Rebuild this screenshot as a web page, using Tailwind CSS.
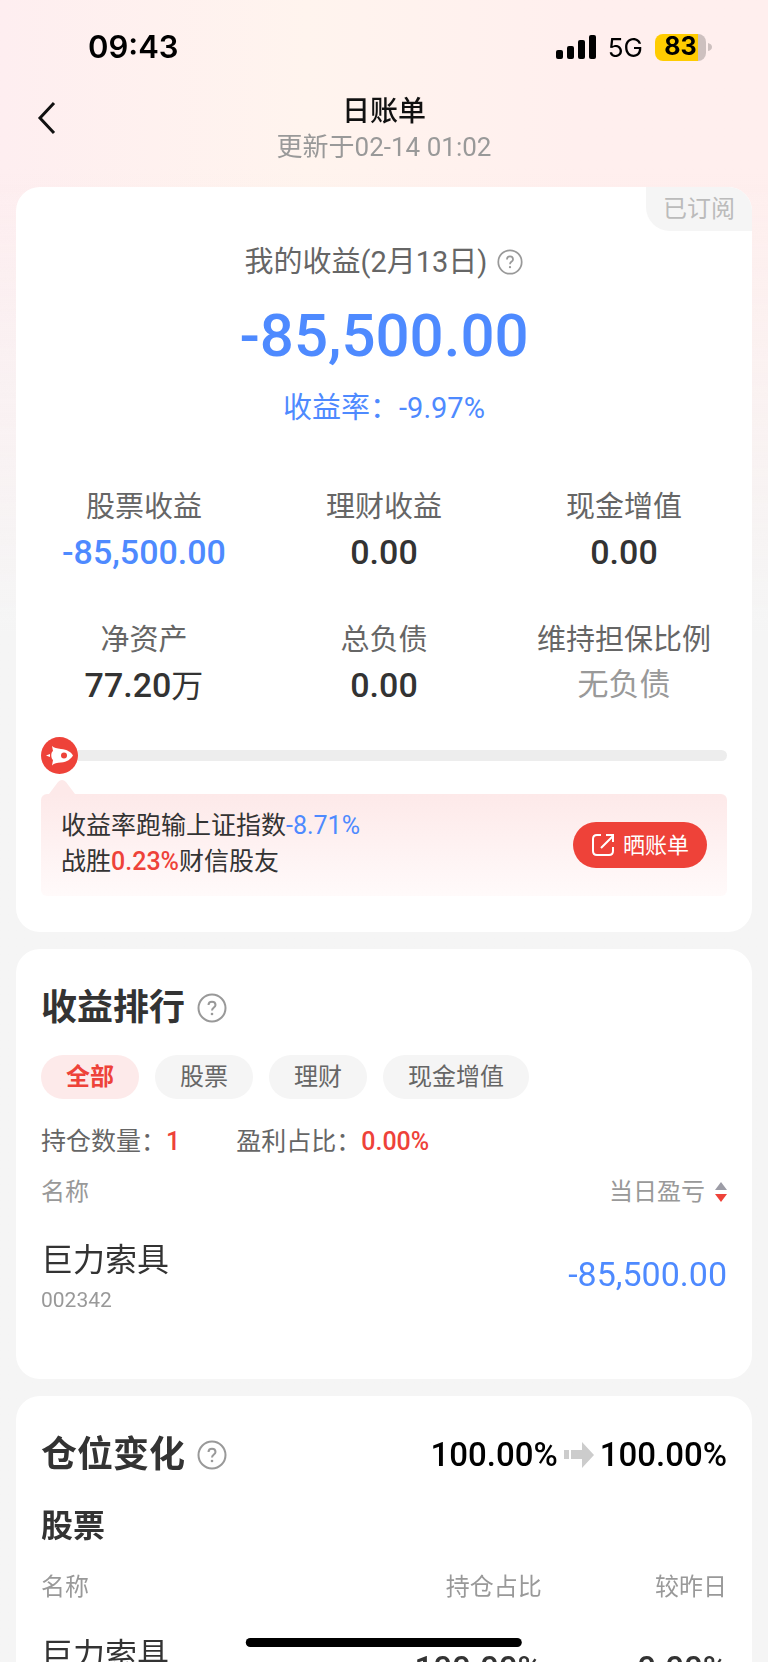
<!DOCTYPE html>
<html lang="zh-CN">
  <head>
    <meta charset="UTF-8" />
    <meta name="viewport" content="width=device-width, initial-scale=1.0" />
    <title>日账单</title>
    <script src="https://cdn.jsdelivr.net/npm/@tailwindcss/browser@4"></script>
  </head>

  <body class="bg-[#f5f5f5] font-['Roboto','Noto_Sans_CJK_SC',sans-serif] text-[#333]">
    <div class="h-screen overflow-hidden bg-linear-to-b from-transparent from-10% to-[#f5f5f5] to-38%">
      <div class="fixed inset-0 -z-10 bg-linear-to-r from-[#feeef0] via-[#fff4ee] via-40% to-[#ffefee] to-75%"></div>

      <!-- Status bar -->
      <div class="flex h-[94px] items-center justify-between pr-14 pl-[88px] font-['Inter',sans-serif] text-black">
        <span class="text-[31px] font-semibold">09:43</span>
        <div class="flex items-center">
          <svg class="mr-3 h-6 w-10" viewBox="0 0 40 24">
            <rect x="0" y="15" width="7" height="9" rx="2" />
            <rect x="11" y="11" width="7" height="13" rx="2" />
            <rect x="22" y="5" width="7" height="19" rx="2" />
            <rect x="33" y="0" width="7" height="24" rx="2" />
          </svg>
          <span class="mr-3 text-[26px]">5G</span>
          <span class="flex h-[27px] w-[51px] items-center justify-center rounded-lg bg-linear-to-r from-[#ffcc00] from-84% to-[#cdc0bf] to-84% text-[25px] font-bold">83</span>
          <svg class="ml-[2px] h-2 w-1" viewBox="0 0 4 8" fill="#cdc0bf"><path d="M0 0 Q4 1 4 4 Q4 7 0 8 Z" /></svg>
        </div>
      </div>

      <!-- Title -->
      <header class="relative pb-[23px] text-center">
        <button class="absolute top-1.5 left-[35px]" aria-label="返回">
          <svg class="h-9 w-6" viewBox="0 0 24 36" fill="none" stroke="#111" stroke-width="3"><path d="M19 3 L5 18 L19 33" /></svg>
        </button>
        <h1 class="text-[28px] leading-9 font-medium text-[#111]">日账单</h1>
        <p class="text-[26px] leading-[34px] text-[#999]">更新于02-14 01:02</p>
      </header>

      <main class="flex flex-col gap-[17px] px-4">
        <!-- Daily profit -->
        <section class="relative rounded-3xl bg-white px-[25px] pt-[55px] pb-9">
          <button class="absolute top-0 right-0 h-11 rounded-tr-3xl rounded-bl-3xl bg-[#f5f5f5] px-[17px] text-2xl text-[#bbb]">已订阅</button>

          <div class="flex items-center justify-center gap-2.5 text-[29px] leading-10 text-[#666]">
            <h2>我的收益(2月13日)</h2>
            <button aria-label="收益说明">
              <svg class="size-[26px]" viewBox="0 0 30 30" fill="none" stroke="#999" stroke-width="2">
                <circle cx="15" cy="15" r="13.5" />
                <path d="M11.500 12 C11.500 7.500 18.500 7.500 18.500 12 C18.500 14.500 15 14.500 15 17.500" />
                <circle cx="15" cy="21" r="1.300" fill="#999" stroke="none" />
              </svg>
            </button>
          </div>
          <p class="mt-3.5 text-center text-[60px] leading-20 font-medium text-[#4e8aff]">-85,500.00</p>
          <p class="mt-3 text-center text-[29px] leading-10 text-[#4e8aff]">收益率：-9.97%</p>

          <dl class="-mx-[17px] mt-[55px] grid grid-cols-3 gap-y-[43px] text-center">
            <div>
              <dt class="text-[29px] leading-12 text-[#666]">股票收益</dt>
              <dd class="text-[34px] leading-[42px] font-medium text-[#4e8aff]">-85,500.00</dd>
            </div>
            <div>
              <dt class="text-[29px] leading-12 text-[#666]">理财收益</dt>
              <dd class="text-[34px] leading-[42px] font-medium">0.00</dd>
            </div>
            <div>
              <dt class="text-[29px] leading-12 text-[#666]">现金增值</dt>
              <dd class="text-[34px] leading-[42px] font-medium">0.00</dd>
            </div>
            <div>
              <dt class="text-[29px] leading-12 text-[#666]">净资产</dt>
              <dd class="text-[34px] leading-[42px] font-medium">77.20<span class="text-[32px] font-normal">万</span></dd>
            </div>
            <div>
              <dt class="text-[29px] leading-12 text-[#666]">总负债</dt>
              <dd class="text-[34px] leading-[42px] font-medium">0.00</dd>
            </div>
            <div>
              <dt class="text-[29px] leading-12 text-[#666]">维持担保比例</dt>
              <dd class="text-[31px] leading-[42px] text-[#999]">无负债</dd>
            </div>
          </dl>

          <!-- Rank track -->
          <div class="mt-[30px] flex items-center">
            <svg class="size-[37px] shrink-0" viewBox="0 0 37 37">
              <circle cx="18.500" cy="18.500" r="18.500" fill="#ee4239" />
              <path d="M11 9 C13 11 16 11.500 20 12 C26 12.500 30 15 32 18.500 C30 22 26 25 20 25.500 C16 26 13 26 11 28.500 L12 23 C10 22 9.500 15 12 14 Z" fill="#fff" />
              <path d="M5 18.500 L9 17 V20 Z" fill="#fff" />
              <circle cx="23" cy="18.500" r="3" fill="#ee4239" />
            </svg>
            <div class="h-[11px] grow rounded-r-full bg-[#ededed]"></div>
          </div>

          <div class="relative mt-5 flex h-[102px] items-center justify-between rounded-md bg-linear-to-b from-[#fde9e9] to-[#fffafa] pr-5 pl-5">
            <svg class="absolute -top-[14px] left-2 h-[14px] w-[26px]" viewBox="0 0 26 14" fill="#fde9e9"><path d="M0 14 L9 2 Q13 -2 17 2 L26 14 Z" /></svg>
            <p class="pb-0.5 text-[25px] leading-9">
              收益率跑输上证指数<span class="text-[#4e8aff]">-8.71%</span><br />
              战胜<span class="font-medium text-[#ee4239]">0.23%</span>财信股友
            </p>
            <button class="flex h-[46px] items-center gap-2 rounded-full bg-[#ee4239] px-[18px] text-[22px] text-white">
              <svg class="size-6" viewBox="0 0 24 24" fill="none" stroke="#fff" stroke-width="2">
                <path d="M10 2 H6 Q2 2 2 6 V18 Q2 22 6 22 H18 Q22 22 22 18 V14" />
                <path d="M10 15 L22 3 M15 2 H22 V9" />
              </svg>
              晒账单
            </button>
          </div>
        </section>

        <!-- Profit ranking -->
        <section class="rounded-3xl bg-white px-[25px] pt-[34px] pb-[61px]">
          <div class="flex items-center gap-3">
            <h2 class="text-4xl leading-[50px] font-bold">收益排行</h2>
            <button aria-label="排行说明">
              <svg class="size-[30px]" viewBox="0 0 30 30" fill="none" stroke="#999" stroke-width="2">
                <circle cx="15" cy="15" r="13.500" />
                <path d="M11.500 12 C11.500 7.500 18.500 7.500 18.500 12 C18.500 14.500 15 14.500 15 17.500" />
                <circle cx="15" cy="21" r="1.300" fill="#999" stroke="none" />
              </svg>
            </button>
          </div>

          <div class="mt-[22px] flex gap-4 text-2xl text-[#666]">
            <button class="h-11 rounded-full bg-[#fdeaea] px-[25px] font-bold text-[#ee4239]">全部</button>
            <button class="h-11 rounded-full bg-[#f5f5f5] px-[25px]">股票</button>
            <button class="h-11 rounded-full bg-[#f5f5f5] px-[25px]">理财</button>
            <button class="h-11 rounded-full bg-[#f5f5f5] px-[25px]">现金增值</button>
          </div>

          <div class="mt-[23px] flex gap-14 text-[25px] leading-10 text-[#666]">
            <p>持仓数量：<span class="font-medium text-[#ee4239]">1</span></p>
            <p>盈利占比：<span class="font-medium text-[#ee4239]">0.00%</span></p>
          </div>

          <table class="mt-2.5 w-full">
            <thead class="text-2xl leading-10 text-[#999]">
              <tr>
                <th class="text-left font-normal">名称</th>
                <th class="font-normal">
                  <button class="ml-auto flex items-center gap-2.5">
                    当日盈亏
                    <svg class="h-[22px] w-3" viewBox="0 0 12 22">
                      <path d="M6 1 L12 9 H0 Z" fill="#9c9ca6" />
                      <path d="M0 13 H12 L6 21 Z" fill="#ee4239" />
                    </svg>
                  </button>
                </th>
              </tr>
            </thead>
            <tbody>
              <tr>
                <td class="pt-[26px]">
                  <p class="text-[32px] leading-11">巨力索具</p>
                  <p class="text-[21px] leading-9 text-[#999]">002342</p>
                </td>
                <td class="pt-[26px] pb-2 text-right text-[34px] text-[#4e8aff]">-85,500.00</td>
              </tr>
            </tbody>
          </table>
        </section>

        <!-- Position changes -->
        <section class="rounded-3xl bg-white px-[25px] pt-[34px] pb-[61px]">
          <div class="flex items-center gap-3">
            <h2 class="text-4xl leading-[50px] font-bold">仓位变化</h2>
            <button aria-label="仓位说明">
              <svg class="size-[30px]" viewBox="0 0 30 30" fill="none" stroke="#999" stroke-width="2">
                <circle cx="15" cy="15" r="13.500" />
                <path d="M11.500 12 C11.500 7.500 18.500 7.500 18.500 12 C18.500 14.500 15 14.500 15 17.500" />
                <circle cx="15" cy="21" r="1.300" fill="#999" stroke="none" />
              </svg>
            </button>
            <p class="ml-auto flex items-center gap-1.5 text-[33px] font-medium text-black">
              100.00%
              <svg class="h-[26px] w-[30px]" viewBox="0 0 30 26" fill="#ccc"><path d="M0 8 H5 V17 H0 Z M7 8 H18 V0 L30 13 L18 26 V17 H7 Z" /></svg>
              100.00%
            </p>
          </div>

          <h3 class="mt-[26px] text-[32px] leading-10 font-bold">股票</h3>
          <table class="mt-[21px] w-full">
            <thead class="text-2xl leading-10 text-[#999]">
              <tr>
                <th class="text-left font-normal">名称</th>
                <th class="text-right font-normal">持仓占比</th>
                <th class="w-[27%] text-right font-normal">较昨日</th>
              </tr>
            </thead>
            <tbody>
              <tr>
                <td class="pt-[26px]">
                  <p class="text-[32px] leading-11">巨力索具</p>
                  <p class="text-[21px] leading-9 text-[#999]">002342</p>
                </td>
                <td class="pt-[26px] pb-2 text-right text-[33px] font-medium">100.00%</td>
                <td class="pt-[26px] pb-2 text-right text-[33px] font-medium">0.00%</td>
              </tr>
            </tbody>
          </table>
        </section>
      </main>
    </div>

    <!-- Home indicator -->
    <div class="fixed bottom-[15px] left-1/2 h-[9px] w-[36%] -translate-x-1/2 rounded-full bg-black"></div>
  </body>
</html>
